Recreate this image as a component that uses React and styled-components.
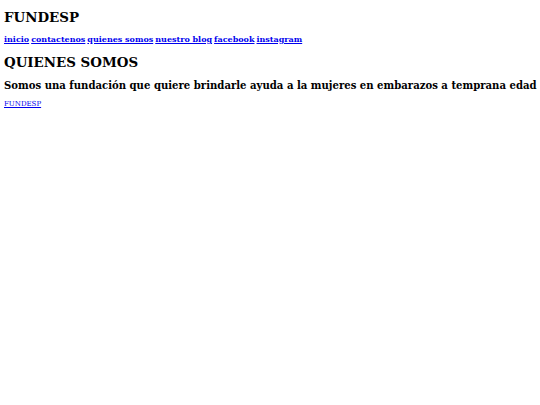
import React from 'react'
import styled, { createGlobalStyle } from 'styled-components'

const Global = createGlobalStyle`
  body {
    margin: 0;
    padding: 0 4px;
    background: #ffffff;
    font-family: "DejaVu Serif", serif;
    color: #000000;
  }
`

const Page = styled.div`
  display: flex;
  flex-direction: column;
  padding-top: 9px;
`

const Title = styled.h1`
  font-size: 13.4px;
  line-height: 16px;
  font-weight: bold;
  margin: 0 0 ${(p) => p.$gap}px 0;
`

const Nav = styled.nav`
  display: flex;
  gap: 2px;
  font-size: 8px;
  line-height: 9px;
  margin-bottom: 10px;
`

const NavLink = styled.a`
  font-weight: bold;
  color: #0000ee;
  text-decoration: underline;
`

const Lead = styled.h2`
  font-size: 10.1px;
  line-height: 12.6px;
  font-weight: bold;
  margin: 0 0 7px 0;
  white-space: nowrap;
`

const Footer = styled.footer`
  font-size: 7px;
  line-height: 8px;
`

const FootLink = styled.a`
  color: #0000ee;
  text-decoration: underline;
`

const links = ['inicio', 'contactenos', 'quienes somos', 'nuestro blog', 'facebook', 'instagram']

const App = () => {
  return (
    <>
      <Global />
      <Page>
        <Title $gap={10}>FUNDESP</Title>
        <Nav>
          {links.map((el) => (
            <NavLink key={el} href="#">{el}</NavLink>
          ))}
        </Nav>
        <Title $gap={10}>QUIENES SOMOS</Title>
        <Lead>Somos una fundación que quiere brindarle ayuda a la mujeres en embarazos a temprana edad</Lead>
        <Footer>
          <FootLink href="#">FUNDESP</FootLink>
        </Footer>
      </Page>
    </>
  )
}

export default App
